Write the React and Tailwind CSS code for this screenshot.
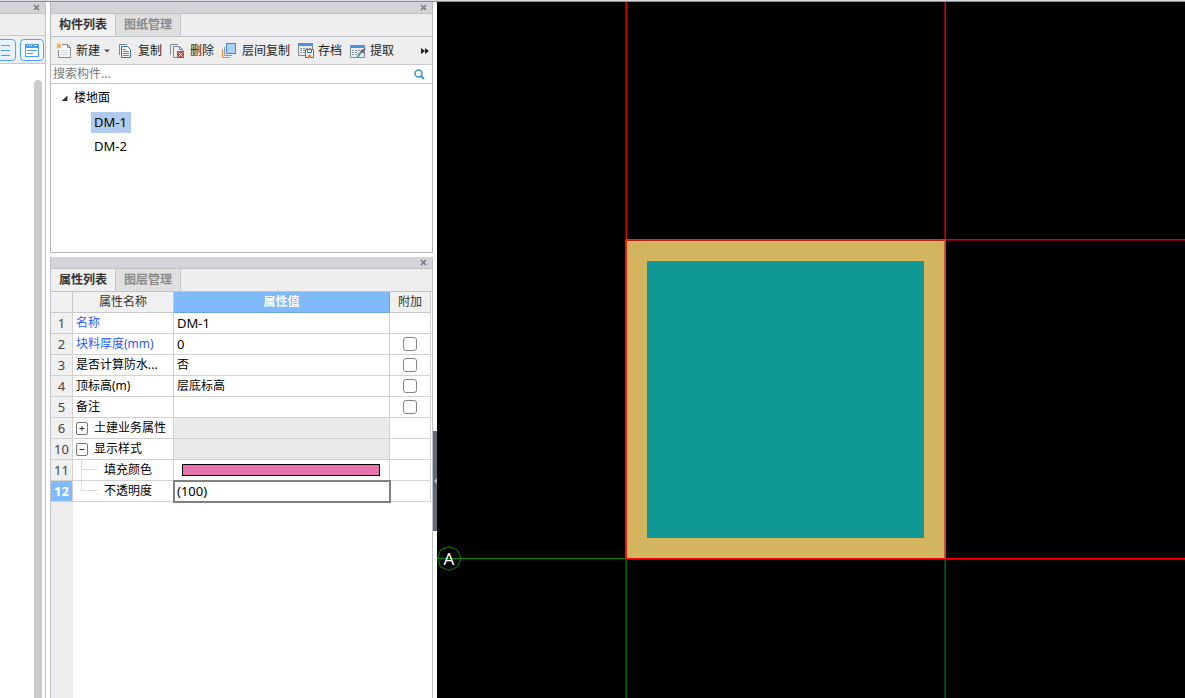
import { useState } from "react"
import clsx from "clsx"

const rows = [
  { no: 1, name: "名称", value: "DM-1", key: true, latin: true },
  { no: 2, name: "块料厚度(mm)", value: "0", key: true, latin: true, check: true },
  { no: 3, name: "是否计算防水...", value: "否", check: true },
  { no: 4, name: "顶标高(m)", value: "层底标高", check: true },
  { no: 5, name: "备注", value: "", check: true },
  { no: 6, name: "土建业务属性", group: "closed" },
  { no: 10, name: "显示样式", group: "open" },
  { no: 11, name: "填充颜色", child: "middle", color: true },
  { no: 12, name: "不透明度", value: "(100)", child: "last", latin: true, active: true },
]

function NewIcon() {
  return (
    <svg width="16" height="16" viewBox="0 0 16 16" fill="none">
      <path d="M6 1.500H11.500L14.500 4.500V14.500H2.500V7" fill="#f7f7f7" stroke="#7d8a94" />
      <path d="M11.500 1.500V4.500H14.500" stroke="#7d8a94" />
      <path d="M5 7.500H12M5 9.500H12M5 11.500H12" stroke="#d3d8dc" />
      <path d="M3 0.500V5.500M0.500 3H5.500M1 1L5 5M5 1L1 5" stroke="#f2a03c" />
    </svg>
  )
}

function CopyIcon() {
  return (
    <svg width="16" height="16" viewBox="0 0 16 16" fill="none">
      <path d="M1.500 12V1.500H9" stroke="#7d8a94" />
      <path d="M3.500 3.500H9.500L12.500 6.500V14.500H3.500Z" fill="#fff" stroke="#2f74c4" />
      <path d="M5 6.500H8M5 8.500H11M5 10.500H11M5 12.500H11" stroke="#3f82d0" />
    </svg>
  )
}

function DeleteIcon() {
  return (
    <svg width="16" height="16" viewBox="0 0 16 16" fill="none">
      <path d="M0.500 11.500V1.500H8" stroke="#7d8a94" />
      <path d="M7 14.500H3.500V3.500H9.500L12.500 6.500V8" stroke="#7d8a94" />
      <path d="M9.500 3.500V6.500H12.500" stroke="#7d8a94" />
      <rect x="7" y="8" width="7" height="7" fill="#cf4545" />
      <path d="M8.500 9.500L12.500 13.500M12.500 9.500L8.500 13.500" stroke="#fff" />
    </svg>
  )
}

function LayerIcon() {
  return (
    <svg width="16" height="16" viewBox="0 0 16 16" fill="none">
      <path d="M0.500 6V14.500H8" stroke="#e8823a" />
      <path d="M2.500 4V12.500H10" stroke="#8a959e" />
      <rect x="4.500" y="0.500" width="9" height="10" fill="#a9cffb" stroke="#3d86dc" />
    </svg>
  )
}

function ArchiveIcon() {
  return (
    <svg width="16" height="16" viewBox="0 0 16 16" fill="none">
      <path d="M0.500 3V12.500H7M14.500 3V6" stroke="#7d8a94" />
      <rect x="0" y="0" width="15" height="3" fill="#4a92e2" />
      <path d="M2 5.500H13M2 7.500H7M2 9.500H7" stroke="#8a959e" strokeDasharray="2 1" />
      <path d="M7.500 6.500H15.500V14.500H7.500Z" fill="#fff" stroke="#2f74c4" />
      <path d="M9.500 7V9.500H13.500V7" stroke="#2f74c4" />
      <rect x="10" y="12" width="3" height="3" fill="#ef7d28" />
    </svg>
  )
}

function ExtractIcon() {
  return (
    <svg width="16" height="16" viewBox="0 0 16 16" fill="none">
      <path d="M0.500 5V14.500H14.500V5" stroke="#7d8a94" />
      <rect x="0" y="2" width="15" height="3" fill="#4a92e2" />
      <path d="M2 7.500H10M2 9.500H8M2 11.500H7" stroke="#8a959e" strokeDasharray="2 1" />
      <path d="M8 13L12 8" stroke="#6e7b85" strokeWidth="2" />
      <path d="M11 7L14 10M12.500 8L15 5.500" stroke="#4f5b64" strokeWidth="1.500" />
      <path d="M7 14.500L9 12" stroke="#28b4c4" strokeWidth="2" />
    </svg>
  )
}

const tools = [
  { label: "新建", Icon: NewIcon, menu: true },
  { label: "复制", Icon: CopyIcon },
  { label: "删除", Icon: DeleteIcon },
  { label: "层间复制", Icon: LayerIcon },
  { label: "存档", Icon: ArchiveIcon },
  { label: "提取", Icon: ExtractIcon },
]

function TitleBar() {
  return (
    <div className="flex h-3 shrink-0 items-center justify-end border-b border-[#c0c1c8] bg-[#d3d4da] pr-[5px]">
      <button type="button" aria-label="关闭" className="block">
        <svg width="7" height="7" viewBox="0 0 7 7" stroke="#777" strokeWidth="1.500">
          <path d="M1 1L6 6M6 1L1 6" />
        </svg>
      </button>
    </div>
  )
}

function Tabs({ items }) {
  return (
    <div className="flex h-[23px] shrink-0 border-b border-[#c0c3ca] bg-[#eee]">
      {items.map((item, i) => (
        <button
          key={item}
          type="button"
          className={clsx(
            "w-[65px] border-r border-[#c4c7cd] font-bold",
            i === 0 ? "bg-[#f0f0f0] text-[#333]" : "bg-[#dfdfdf] text-[#8a8a8a]"
          )}
        >
          {item}
        </button>
      ))}
    </div>
  )
}

function SidePane() {
  return (
    <aside className="flex w-[46px] shrink-0 flex-col overflow-hidden border-r border-[#bfbfc4] bg-white">
      <TitleBar />
      <div className="h-[22px] shrink-0 border-b border-[#c8cad0] bg-[#eee]" />
      <div className="flex h-7 shrink-0 items-center justify-end gap-1 border-b border-[#c8cad0] bg-[#eee] pr-px">
        <button type="button" aria-label="列表" className="flex h-[22px] w-6 shrink-0 items-center justify-center rounded-[4px] border border-[#4fa3f5] bg-[#e6f2fd]">
          <svg width="16" height="16" viewBox="0 0 16 16" stroke="#4a9bea" fill="none">
            <path d="M5 3.500H14M5 8.500H14M5 13.500H14M1 3.500H3M1 8.500H3M1 13.500H3" />
          </svg>
        </button>
        <button type="button" aria-label="面板" className="flex h-[22px] w-6 shrink-0 items-center justify-center rounded-[4px] border border-[#4fa3f5] bg-[#f2f8fe]">
          <svg width="16" height="16" viewBox="0 0 16 16" fill="none">
            <rect x="1.500" y="2.500" width="13" height="12" fill="#fff" stroke="#4a9bea" />
            <rect x="1" y="2" width="14" height="4" fill="#4a9bea" />
            <path d="M3 3.500H4M5 3.500H6M7 3.500H8M10 3.500H13" stroke="#fff" />
            <path d="M3 8.500H13M3 11.500H9" stroke="#4a9bea" />
          </svg>
        </button>
      </div>
      <div className="flex flex-1 justify-end pr-[3px] pt-4">
        <div className="w-2 rounded-t-full bg-[#cbcbcb]" />
      </div>
    </aside>
  )
}

function ComponentPanel() {
  const [selected, setSelected] = useState("DM-1")

  return (
    <section className="flex h-[251px] shrink-0 flex-col border-x border-b border-[#b4b6ba] bg-white">
      <TitleBar />
      <Tabs items={["构件列表", "图纸管理"]} />
      <div className="flex h-7 shrink-0 items-center gap-2 border-b border-[#c8cad0] bg-[#eee] pl-[5px] pr-[3px] text-[#222]">
        {tools.map(({ label, Icon, menu }) => (
          <button key={label} type="button" className="flex shrink-0 items-center gap-1 leading-[18px]">
            <Icon />
            {label}
            {menu && (
              <svg width="6" height="4" viewBox="0 0 6 4" fill="#555">
                <path d="M0 0.500H6L3 3.500Z" />
              </svg>
            )}
          </button>
        ))}
        <button type="button" aria-label="更多" className="ml-auto">
          <svg width="8" height="6" viewBox="0 0 8 6" fill="#222">
            <path d="M0 0L4 3L0 6ZM4 0L8 3L4 6Z" />
          </svg>
        </button>
      </div>
      <label className="flex h-[19px] shrink-0 items-center border-b border-[#c4c7cd] pl-0.5 pr-[7px]">
        <input
          type="text"
          aria-label="搜索构件"
          placeholder="搜索构件..."
          className="min-w-0 flex-1 leading-[18px] outline-none placeholder:text-[#777]"
        />
        <svg width="11" height="11" viewBox="0 0 11 11" fill="none" stroke="#3b95c8">
          <circle cx="4.500" cy="4.500" r="3.500" strokeWidth="1.500" />
          <path d="M7 7L10 10" strokeWidth="2" />
        </svg>
      </label>
      <div className="pl-2 pt-0.5 text-black">
        <div className="flex h-6 items-center gap-1.5 pl-0.5">
          <svg width="7" height="7" viewBox="0 0 7 7" fill="#333">
            <path d="M6.500 0.500V6H0.500Z" />
          </svg>
          <span>楼地面</span>
        </div>
        <ul className="pl-8">
          {["DM-1", "DM-2"].map((name) => (
            <li key={name} className="flex h-6 items-center">
              <button
                type="button"
                onClick={() => setSelected(name)}
                className={clsx("h-[21px] w-10 pl-[3px] text-left text-[13px]", selected === name && "bg-[#b0cbed]")}
              >
                {name}
              </button>
            </li>
          ))}
        </ul>
      </div>
    </section>
  )
}

function PropertyName({ row }) {
  if (row.group) {
    return (
      <div className="flex items-center gap-1.5">
        <button type="button" aria-label={row.name} className="block">
          <svg width="12" height="13" viewBox="0 0 12 13" fill="#fff" stroke="#777">
            <rect x="0.500" y="0.500" width="11" height="12" rx="1.500" />
            <path d={row.group === "closed" ? "M3.500 6.500H8.500M6 4V9" : "M3.500 6.500H8.500"} stroke="#333" />
          </svg>
        </button>
        {row.name}
      </div>
    )
  }
  if (row.child) {
    return (
      <div className="flex h-5 items-center gap-1.5 pl-[5px]">
        <svg width="17" height="20" viewBox="0 0 17 20" fill="none" stroke="#dcdcdc">
          <path d={row.child === "last" ? "M0.500 0V9.500H17" : "M0.500 0V20M0.500 9.500H17"} />
        </svg>
        {row.name}
      </div>
    )
  }
  return row.name
}

function PropertyTable() {
  return (
    <table className="w-full table-fixed border-separate border-spacing-0 text-left leading-[18px] text-black">
      <colgroup>
        <col className="w-[22px]" />
        <col className="w-[101px]" />
        <col />
        <col className="w-[41px]" />
      </colgroup>
      <thead>
        <tr className="h-[21px] text-center text-[#333]">
          <td className="border-b border-r border-[#c8c8cc] bg-[#f0f0f0] p-0" />
          <th className="border-b border-r border-[#c8c8cc] bg-[#f0f0f0] p-0 font-normal">属性名称</th>
          <th className="border-b border-r border-[#6ba4e4] bg-[#80bafa] p-0 text-white">属性值</th>
          <th className="border-b border-r border-[#c8c8cc] bg-[#f0f0f0] p-0 font-normal">附加</th>
        </tr>
      </thead>
      <tbody>
        {rows.map((row) => (
          <tr key={row.no} className="h-[21px]">
            <th
              className={clsx(
                "border-b border-r border-[#d2d2d2] p-0 text-center text-[13px] leading-4",
                row.active ? "bg-[#80bafa] font-bold text-white" : "bg-[#f0f0f0] font-normal text-[#444]"
              )}
            >
              {row.no}
            </th>
            <td className={clsx("whitespace-nowrap border-b border-r border-[#d2d2d2] p-0 pl-[3px]", row.key && "text-[#1f5cff]")}>
              <PropertyName row={row} />
            </td>
            <td
              className={clsx(
                "border-b border-r border-[#d2d2d2] p-0 pl-[3px]",
                row.group && "bg-[#eaeaea]",
                row.latin && "text-[13px] leading-4",
                row.active && "outline-2 -outline-offset-1 outline-[#808080]"
              )}
            >
              {row.color ? <div className="ml-[5px] mr-[9px] h-3 border border-black bg-[#e674ac]" /> : row.value}
            </td>
            <td className="border-b border-r border-[#d2d2d2] p-0">
              {row.check && (
                <input
                  type="checkbox"
                  aria-label={row.name}
                  className="mx-auto block size-3.5 appearance-none rounded-[3px] border border-[#858585] bg-white"
                />
              )}
            </td>
          </tr>
        ))}
      </tbody>
    </table>
  )
}

function PropertyPanel() {
  return (
    <section className="flex flex-1 flex-col border-x border-[#c0c1c8] bg-white">
      <TitleBar />
      <Tabs items={["属性列表", "图层管理"]} />
      <div className="pr-px">
        <PropertyTable />
      </div>
      <div className="w-[22px] flex-1 bg-[#eee]" />
    </section>
  )
}

function DrawingView() {
  return (
    <main className="relative min-w-0 flex-1 overflow-hidden bg-black">
      <svg className="absolute inset-0 size-full" fill="none">
        <rect x="189" y="238" width="319" height="319" fill="#d4b55f" />
        <rect x="210" y="259" width="277" height="277" fill="#109994" />
        {/* soft edge of every axis line */}
        <path d="M188.500 0V238M507.500 0V238M508 238.500H3000" stroke="#7c0000" />
        <path d="M188.500 557V2000M507.500 557V2000" stroke="#003c00" />
        <path d="M188.500 238V557M189 238.500H508" stroke="#b4261a" />
        <path d="M507.500 238V557" stroke="#d8553a" />
        <path d="M189.500 0V238M508.500 0V238M508 237.500H3000" stroke="#dc0000" />
        <path d="M189.500 557V2000M508.500 557V2000" stroke="#006400" />
        <path d="M189.500 238V557M508.500 238V557M189 237.500H509" stroke="#fa2010" />
        <path d="M189 557.500H3000" stroke="#b80000" />
        <path d="M189 556.500H3000" stroke="#ff0000" />
        <path d="M0 556.500H189" stroke="#008a00" />
        <path d="M12 544.500L20.500 548L24 556.500L20.500 565L12 568.500L3.500 565L0.500 556.500L3.500 548Z" stroke="#008a00" />
        <text x="12" y="563" textAnchor="middle" fill="#fff" className="text-[17px]">
          A
        </text>
      </svg>
    </main>
  )
}

export default function App() {
  return (
    <div className="flex min-h-screen flex-col bg-white font-['Noto_Sans','Noto_Sans_CJK_SC',sans-serif] text-xs leading-4">
      <div className="h-0.5 shrink-0 border-b border-[#8e9297] bg-[#d5d8dc]" />
      <div className="flex flex-1">
        <SidePane />
        <div className="ml-1 flex w-[383px] shrink-0 flex-col gap-1">
          <ComponentPanel />
          <PropertyPanel />
        </div>
        {/* splitter handle */}
        <div className="flex w-1 shrink-0 flex-col pt-[429px]">
          <button type="button" aria-label="收起" className="flex h-[100px] items-center bg-[#5f6b77]">
            <svg width="4" height="8" viewBox="0 0 4 8" fill="#b4bcc4">
              <path d="M4 1V7L1 4Z" />
            </svg>
          </button>
        </div>
        <DrawingView />
      </div>
    </div>
  )
}
